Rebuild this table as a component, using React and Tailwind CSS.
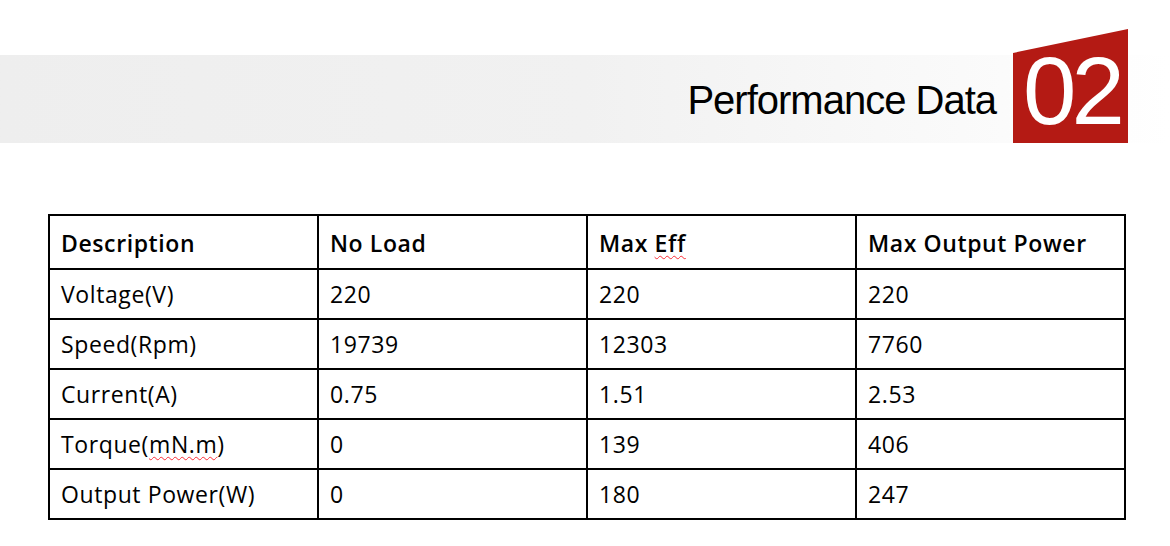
import React from "react";

const HEADERS = ["Description", "No Load", "Max Eff", "Max Output Power"];

const ROWS = [
  ["Voltage(V)", "220", "220", "220"],
  ["Speed(Rpm)", "19739", "12303", "7760"],
  ["Current(A)", "0.75", "1.51", "2.53"],
  ["Torque(mN.m)", "0", "139", "406"],
  ["Output Power(W)", "0", "180", "247"],
];

const Squiggle = ({ children }) => (
  <span className="underline decoration-wavy decoration-red-500 decoration-[1px] underline-offset-[3px]">{children}</span>
);

const renderCell = (text) => {
  if (text === "Max Eff") {
    return <>Max <Squiggle>Eff</Squiggle></>;
  }
  if (text === "Torque(mN.m)") {
    return <>Torque(<Squiggle>mN.m</Squiggle>)</>;
  }
  return text;
};

const App = () => {
  return (
    <div className="w-[1170px] h-[546px] bg-white overflow-hidden">
      {/* title band */}
      <div className="mt-[55px] h-[88px] flex items-end justify-end pr-[42px] bg-gradient-to-r from-[#eeeeee] via-[#f1f1f1] to-white">
        <div className="self-center mr-[17px] mt-[2px] text-[40px] leading-none tracking-[-1px] text-black font-['Liberation_Sans',Arial,sans-serif]">
          Performance Data
        </div>
        <div className="w-[115px] h-[114px] bg-[#b41a14] [clip-path:polygon(0_24px,100%_0,100%_100%,0_100%)] flex items-end justify-center pb-[4px]">
          <span className="text-white text-[96px] leading-none tracking-[-5px] pl-[2px] font-['Liberation_Sans',Arial,sans-serif]">02</span>
        </div>
      </div>

      {/* data table */}
      <div className="mt-[71px] ml-[48px]">
        <table className="w-[1078px] table-fixed border-collapse border-2 border-black font-['Open_Sans',sans-serif] text-[23px] tracking-[0.6px] text-black">
          <thead>
            <tr className="h-[54px]">
              {HEADERS.map((h, i) => (
                <th key={i} className="border-2 border-black text-left font-semibold px-[11px] pt-[2px]">
                  {renderCell(h)}
                </th>
              ))}
            </tr>
          </thead>
          <tbody>
            {ROWS.map((row, r) => (
              <tr key={r} className="h-[50px]">
                {row.map((cell, c) => (
                  <td key={c} className="border-2 border-black px-[11px] pt-[1px]">
                    {renderCell(cell)}
                  </td>
                ))}
              </tr>
            ))}
          </tbody>
        </table>
      </div>
    </div>
  );
};

export default App;
